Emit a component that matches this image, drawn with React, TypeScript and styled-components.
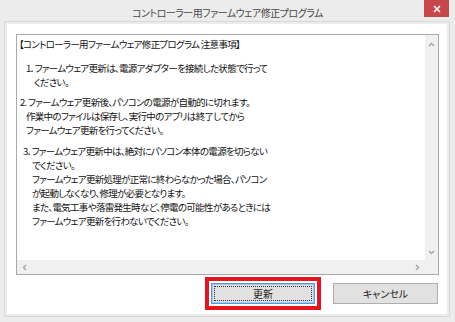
import React from 'react'
import styled, { createGlobalStyle } from 'styled-components'

const Global = createGlobalStyle`
  html, body {
    margin: 0;
    padding: 0;
    background: #ececec;
  }
  * {
    box-sizing: border-box;
  }
`

const Window = styled.div`
  width: 455px;
  height: 322px;
  background: #ececec;
  display: flex;
  flex-direction: column;
  font-family: 'Noto Sans CJK JP', 'Noto Sans', sans-serif;
  font-feature-settings: 'palt';
  overflow: hidden;
`

const TitleBar = styled.div`
  height: 24px;
  display: grid;
  grid-template-columns: 1fr auto 1fr;
  align-items: start;
`

const Title = styled.div`
  grid-column: 2;
  padding-top: 6px;
  font-size: 10px;
  line-height: 13px;
  color: #4a4a4a;
  letter-spacing: -0.5px;
`

const CloseButton = styled.div`
  grid-column: 3;
  justify-self: end;
  margin-right: 6px;
  width: 25px;
  height: 17px;
  background: #c7474b;
  display: flex;
  align-items: center;
  justify-content: center;
`

const Client = styled.div`
  flex: 1;
  margin: 0 8px 8px 7px;
  background: #fff;
  box-shadow: 0 0 0 2px #ececec, 0 0 0 3px #d8d8d8;
  padding: 10px 8px 10px 9px;
  display: flex;
  flex-direction: column;
  gap: 8px;
`

const TextBox = styled.div`
  height: 241px;
  border: 1px solid #a9a9a9;
  display: grid;
  grid-template-columns: 1fr 13px;
  grid-template-rows: 1fr 14px;
`

const Content = styled.div`
  padding: 2px 0 0 2px;
  font-size: 9.5px;
  line-height: 14px;
  letter-spacing: -0.7px;
  color: #111;
  white-space: pre;
  overflow: hidden;
`

const Line = styled.div<{ $indent: number; $gap?: number }>`
  padding-left: ${(p) => p.$indent}px;
  margin-top: ${(p) => p.$gap ?? 0}px;
`

const ScrollBar = styled.div<{ $horizontal?: boolean }>`
  background: #f0f0f0;
  display: flex;
  flex-direction: ${(p) => (p.$horizontal ? 'row' : 'column')};
  justify-content: space-between;
  align-items: center;
  padding: ${(p) => (p.$horizontal ? '0 4px 0 4px' : '6px 0 4px 0')};
`

const Corner = styled.div`
  background: #f0f0f0;
`

const ButtonRow = styled.div`
  display: flex;
  justify-content: flex-end;
  gap: 18px;
  padding-right: 1px;
`

const Button = styled.button<{ $focused?: boolean; $width: number }>`
  width: ${(p) => p.$width}px;
  height: 21px;
  margin: 0;
  padding: 0;
  background: #e1e1e1;
  border: 1px solid ${(p) => (p.$focused ? '#4f9be0' : '#adadad')};
  box-shadow: ${(p) => (p.$focused ? 'inset 0 0 0 1px #9ccbf2' : 'none')};
  font-family: inherit;
  font-feature-settings: 'palt';
  font-size: 10px;
  color: #222;
  display: flex;
  align-items: center;
  justify-content: center;
  position: relative;
`

const FocusRect = styled.span`
  position: absolute;
  inset: 2px;
  border: 1px dotted #333;
`

const Highlight = styled.div`
  outline: 4px solid #e5141f;
  outline-offset: 2px;
  display: flex;
`

const Chevron = ({ dir }: { dir: 'up' | 'down' | 'left' | 'right' }) => {
  const rot = { up: 0, right: 90, down: 180, left: 270 }[dir]
  return (
    <svg width="7" height="7" viewBox="0 0 7 7" style={{ transform: `rotate(${rot}deg)` }}>
      <path d="M1 5 L3.5 2.5 L6 5" fill="none" stroke="#a3a3a3" strokeWidth="1.4" />
    </svg>
  )
}

const lines: { text: string; indent: number; gap?: number }[] = [
  { text: '【コントローラー用ファームウェア修正プログラム 注意事項】', indent: 0 },
  { text: '1．ファームウェア更新は、電源アダプターを接続した状態で行って', indent: 7, gap: 10 },
  { text: 'ください。', indent: 15 },
  { text: '2. ファームウェア更新後、パソコンの電源が自動的に切れます。', indent: 1, gap: 6 },
  { text: '作業中のファイルは保存し、実行中のアプリは終了してから', indent: 7 },
  { text: 'ファームウェア更新を行ってください。', indent: 7 },
  { text: '3．ファームウェア更新中は、絶対にパソコン本体の電源を切らない', indent: 4, gap: 7 },
  { text: 'でください。', indent: 13 },
  { text: 'ファームウェア更新処理が正常に終わらなかった場合、パソコン', indent: 13 },
  { text: 'が起動しなくなり、修理が必要となります。', indent: 13 },
  { text: 'また、電気工事や落雷発生時など、停電の可能性があるときには', indent: 13 },
  { text: 'ファームウェア更新を行わないでください。', indent: 13 },
]

export default function App() {
  return (
    <>
      <Global />
      <Window>
        <TitleBar>
          <Title>コントローラー用ファームウェア修正プログラム</Title>
          <CloseButton>
            <svg width="8" height="8" viewBox="0 0 8 8">
              <path d="M1 1 L7 7 M7 1 L1 7" stroke="#fff" strokeWidth="1.6" />
            </svg>
          </CloseButton>
        </TitleBar>
        <Client>
          <TextBox>
            <Content>
              {lines.map((l, i) => (
                <Line key={i} $indent={l.indent} $gap={l.gap}>
                  {l.text}
                </Line>
              ))}
            </Content>
            <ScrollBar>
              <Chevron dir="up" />
              <Chevron dir="down" />
            </ScrollBar>
            <ScrollBar $horizontal>
              <Chevron dir="left" />
              <Chevron dir="right" />
            </ScrollBar>
            <Corner />
          </TextBox>
          <ButtonRow>
            <Highlight>
              <Button $focused $width={104}>
                <FocusRect />
                更新
              </Button>
            </Highlight>
            <Button $width={105}>キャンセル</Button>
          </ButtonRow>
        </Client>
      </Window>
    </>
  )
}
